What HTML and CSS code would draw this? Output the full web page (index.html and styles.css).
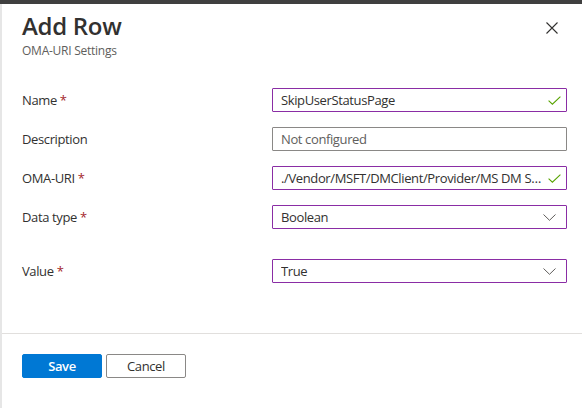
FILE: index.html
```html
<!DOCTYPE html>
<html lang="en">
<head>
<meta charset="utf-8">
<title>Add Row</title>
<link rel="stylesheet" href="styles.css">
</head>
<body>
<div class="topbar"></div>
<div class="main">
  <div class="edge"></div>
  <div class="panel">
    <header class="header">
      <div class="titles">
        <h1 class="title">Add Row</h1>
        <div class="subtitle">OMA-URI Settings</div>
      </div>
      <button class="close" aria-label="Close">
        <svg width="12" height="12" viewBox="0 0 12 12"><path d="M0.5 0.5 L11.5 11.5 M11.5 0.5 L0.5 11.5" stroke="#323130" stroke-width="1.1" fill="none"/></svg>
      </button>
    </header>
    <div class="form">
      <div class="row">
        <div class="label">Name <span class="req">*</span></div>
        <div class="field active">
          <span class="value">SkipUserStatusPage</span>
          <svg class="check" width="13" height="9" viewBox="0 0 13 9"><polyline points="0.6,4.6 4.4,8.2 12.4,0.6" stroke="#57a300" stroke-width="1.1" fill="none"/></svg>
        </div>
      </div>
      <div class="row">
        <div class="label">Description</div>
        <div class="field"><span class="value placeholder">Not configured</span></div>
      </div>
      <div class="row">
        <div class="label">OMA-URI <span class="req">*</span></div>
        <div class="field active">
          <span class="value">./Vendor/MSFT/DMClient/Provider/MS DM Server/FirstSyncStatus/SkipUserStatusPage</span>
          <svg class="check" width="13" height="9" viewBox="0 0 13 9"><polyline points="0.6,4.6 4.4,8.2 12.4,0.6" stroke="#57a300" stroke-width="1.1" fill="none"/></svg>
        </div>
      </div>
      <div class="row">
        <div class="label">Data type <span class="req">*</span></div>
        <div class="field active select">
          <span class="value">Boolean</span>
          <svg class="chev" width="13" height="7" viewBox="0 0 13 7"><polyline points="0.5,0.5 6.5,6.3 12.5,0.5" stroke="#605e5c" stroke-width="1" fill="none"/></svg>
        </div>
      </div>
      <div class="row row-value">
        <div class="label">Value <span class="req">*</span></div>
        <div class="field active select">
          <span class="value">True</span>
          <svg class="chev" width="13" height="7" viewBox="0 0 13 7"><polyline points="0.5,0.5 6.5,6.3 12.5,0.5" stroke="#605e5c" stroke-width="1" fill="none"/></svg>
        </div>
      </div>
    </div>
    <footer class="footer">
      <button class="btn primary">Save</button>
      <button class="btn">Cancel</button>
    </footer>
  </div>
</div>
</body>
</html>
```

FILE: styles.css
```css
* { box-sizing: border-box; }
html, body { margin: 0; padding: 0; }
body {
  width: 582px;
  height: 408px;
  overflow: hidden;
  background: #ffffff;
  font-family: "Open Sans", "Noto Sans", "Liberation Sans", sans-serif;
  color: #323130;
  letter-spacing: -0.38px;
}
.topbar { height: 4px; background: #3f3f3f; }
.main { display: flex; height: 404px; }
.edge { width: 2px; background: #e6e6e6; flex: none; }
.panel { flex: 1; display: flex; flex-direction: column; }
.header {
  display: flex;
  justify-content: space-between;
  align-items: flex-start;
  padding: 6px 0 0 20px;
}
.title {
  margin: 0;
  font-size: 24px;
  line-height: 32px;
  font-weight: 600;
  color: #323130;
  letter-spacing: -0.3px;
}
.subtitle {
  margin-top: 1px;
  font-size: 12px;
  line-height: 16px;
  color: #605e5c;
  letter-spacing: -0.25px;
}
.close {
  border: 0;
  background: none;
  padding: 0;
  margin: 12px 24px 0 0;
  width: 12px;
  height: 12px;
  display: flex;
}
.form {
  display: flex;
  flex-direction: column;
  gap: 15px;
  padding: 29px 0 0 20px;
  height: 274px;
}
.row {
  display: grid;
  grid-template-columns: 250px 295px;
  align-items: center;
  height: 24px;
}
.row-value { margin-top: 15px; }
.label { font-size: 13px; color: #323130; }
.req { color: #a4262c; }
.field {
  height: 24px;
  border: 1px solid #8a8886;
  border-radius: 1px;
  display: flex;
  align-items: center;
  padding: 0 5px 0 8px;
  gap: 2px;
  font-size: 13px;
  min-width: 0;
}
.field.active { border-color: #8a2da5; }
.value {
  flex: 1;
  min-width: 0;
  white-space: nowrap;
  overflow: hidden;
  text-overflow: ellipsis;
  color: #323130;
}
.placeholder { color: #605e5c; }
.check { flex: none; }
.select { padding-right: 10px; }
.chev { flex: none; }
.footer {
  border-top: 1px solid #e1dfdd;
  padding: 20px 0 0 20px;
  display: flex;
  gap: 4px;
}
.btn {
  width: 80px;
  height: 24px;
  border: 1px solid #8a8886;
  background: #ffffff;
  border-radius: 2px;
  font-family: inherit;
  font-size: 13px;
  letter-spacing: inherit;
  color: #323130;
  padding: 0;
}
.btn.primary {
  background: #0078d4;
  border-color: #0078d4;
  color: #ffffff;
  font-weight: 600;
}
```
